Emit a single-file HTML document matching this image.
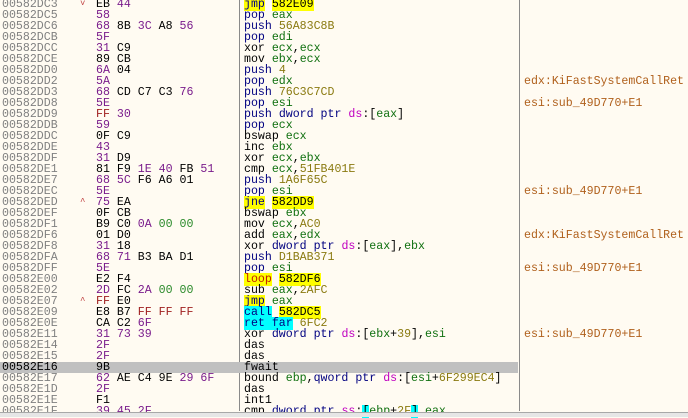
<!DOCTYPE html>
<html><head><meta charset="utf-8"><style>
html,body{margin:0;padding:0;}
body{width:688px;height:416px;overflow:hidden;background:#fffbf2;position:relative;font-family:"Liberation Mono","DejaVu Sans Mono",monospace;font-size:11.6px;}
.r{position:absolute;left:0;width:688px;height:11px;line-height:11px;white-space:pre;}
.r span{position:absolute;top:0;}
.a{left:2px;color:#808080;}
.ar{left:80px;color:#c04040;font-size:9px;}
.b{left:96px;color:#000;}
.i{left:244px;color:#000;}
.c{left:524px;color:#b0601c;}
.sel{background:#c0c0c0;width:518px;}
.sel .a{color:#000;}
i{font-style:normal;}
.p{color:#7a1c8c}.g{color:#2a8a2a}.rd{color:#a02020}
.m{color:#000080}.rg{color:#107010}.n{color:#8a7a10}.s{color:#c000c0}
.y{background:#ffff00;color:#000080}.yn{background:#ffff00;color:#000}.cy{background:#00ffff;color:#000080}.cb{background:#00ffff}
.v{position:absolute;top:0;height:411px;width:1px;background:#8a8a8a;}
</style></head><body>
<div class="v" style="left:239px"></div>
<div class="v" style="left:519px"></div>
<div class="r sel" style="top:362px;"></div>
<div class="r" style="top:-1px"><span class="a">00582DC3</span><span class="ar">˅</span><span class="b">EB <i class="p">44</i></span><span class="i"><i class="y">jmp</i> <i class="yn">582E09</i></span></div>
<div class="r" style="top:10px"><span class="a">00582DC5</span><span class="b"><i class="p">58</i></span><span class="i"><i class="m">pop</i> <i class="rg">eax</i></span></div>
<div class="r" style="top:21px"><span class="a">00582DC6</span><span class="b"><i class="p">68</i> 8B <i class="p">3C</i> A8 <i class="p">56</i></span><span class="i"><i class="m">push</i> <i class="n">56A83C8B</i></span></div>
<div class="r" style="top:32px"><span class="a">00582DCB</span><span class="b"><i class="p">5F</i></span><span class="i"><i class="m">pop</i> <i class="rg">edi</i></span></div>
<div class="r" style="top:43px"><span class="a">00582DCC</span><span class="b"><i class="p">31</i> C9</span><span class="i">xor <i class="rg">ecx</i>,<i class="rg">ecx</i></span></div>
<div class="r" style="top:54px"><span class="a">00582DCE</span><span class="b">89 CB</span><span class="i">mov <i class="rg">ebx</i>,<i class="rg">ecx</i></span></div>
<div class="r" style="top:65px"><span class="a">00582DD0</span><span class="b"><i class="p">6A</i> 04</span><span class="i"><i class="m">push</i> <i class="n">4</i></span></div>
<div class="r" style="top:76px"><span class="a">00582DD2</span><span class="b"><i class="p">5A</i></span><span class="i"><i class="m">pop</i> <i class="rg">edx</i></span><span class="c">edx:KiFastSystemCallRet</span></div>
<div class="r" style="top:87px"><span class="a">00582DD3</span><span class="b"><i class="p">68</i> CD C7 C3 <i class="p">76</i></span><span class="i"><i class="m">push</i> <i class="n">76C3C7CD</i></span></div>
<div class="r" style="top:98px"><span class="a">00582DD8</span><span class="b"><i class="p">5E</i></span><span class="i"><i class="m">pop</i> <i class="rg">esi</i></span><span class="c">esi:sub_49D770+E1</span></div>
<div class="r" style="top:109px"><span class="a">00582DD9</span><span class="b"><i class="rd">FF</i> <i class="p">30</i></span><span class="i"><i class="m">push</i> <i class="m">dword ptr</i> <i class="s">ds</i>:[<i class="rg">eax</i>]</span></div>
<div class="r" style="top:120px"><span class="a">00582DDB</span><span class="b"><i class="p">59</i></span><span class="i"><i class="m">pop</i> <i class="rg">ecx</i></span></div>
<div class="r" style="top:131px"><span class="a">00582DDC</span><span class="b">0F C9</span><span class="i">bswap <i class="rg">ecx</i></span></div>
<div class="r" style="top:142px"><span class="a">00582DDE</span><span class="b"><i class="p">43</i></span><span class="i">inc <i class="rg">ebx</i></span></div>
<div class="r" style="top:153px"><span class="a">00582DDF</span><span class="b"><i class="p">31</i> D9</span><span class="i">xor <i class="rg">ecx</i>,<i class="rg">ebx</i></span></div>
<div class="r" style="top:164px"><span class="a">00582DE1</span><span class="b">81 F9 <i class="p">1E</i> <i class="p">40</i> FB <i class="p">51</i></span><span class="i">cmp <i class="rg">ecx</i>,<i class="n">51FB401E</i></span></div>
<div class="r" style="top:175px"><span class="a">00582DE7</span><span class="b"><i class="p">68</i> <i class="p">5C</i> F6 A6 01</span><span class="i"><i class="m">push</i> <i class="n">1A6F65C</i></span></div>
<div class="r" style="top:186px"><span class="a">00582DEC</span><span class="b"><i class="p">5E</i></span><span class="i"><i class="m">pop</i> <i class="rg">esi</i></span><span class="c">esi:sub_49D770+E1</span></div>
<div class="r" style="top:197px"><span class="a">00582DED</span><span class="ar">^</span><span class="b"><i class="p">75</i> EA</span><span class="i"><i class="y">jne</i> <i class="yn">582DD9</i></span></div>
<div class="r" style="top:208px"><span class="a">00582DEF</span><span class="b">0F CB</span><span class="i">bswap <i class="rg">ebx</i></span></div>
<div class="r" style="top:219px"><span class="a">00582DF1</span><span class="b">B9 C0 <i class="p">0A</i> <i class="g">00</i> <i class="g">00</i></span><span class="i">mov <i class="rg">ecx</i>,<i class="n">AC0</i></span></div>
<div class="r" style="top:230px"><span class="a">00582DF6</span><span class="b">01 D0</span><span class="i">add <i class="rg">eax</i>,<i class="rg">edx</i></span><span class="c">edx:KiFastSystemCallRet</span></div>
<div class="r" style="top:241px"><span class="a">00582DF8</span><span class="b"><i class="p">31</i> 18</span><span class="i">xor <i class="m">dword ptr</i> <i class="s">ds</i>:[<i class="rg">eax</i>],<i class="rg">ebx</i></span></div>
<div class="r" style="top:252px"><span class="a">00582DFA</span><span class="b"><i class="p">68</i> <i class="p">71</i> B3 BA D1</span><span class="i"><i class="m">push</i> <i class="n">D1BAB371</i></span></div>
<div class="r" style="top:263px"><span class="a">00582DFF</span><span class="b"><i class="p">5E</i></span><span class="i"><i class="m">pop</i> <i class="rg">esi</i></span><span class="c">esi:sub_49D770+E1</span></div>
<div class="r" style="top:274px"><span class="a">00582E00</span><span class="b">E2 F4</span><span class="i"><i class="y" style="color:#c02000">loop</i> <i class="yn">582DF6</i></span></div>
<div class="r" style="top:285px"><span class="a">00582E02</span><span class="b"><i class="p">2D</i> FC <i class="p">2A</i> <i class="g">00</i> <i class="g">00</i></span><span class="i">sub <i class="rg">eax</i>,<i class="n">2AFC</i></span></div>
<div class="r" style="top:296px"><span class="a">00582E07</span><span class="ar">^</span><span class="b"><i class="rd">FF</i> E0</span><span class="i"><i class="y">jmp</i> <i class="rg">eax</i></span></div>
<div class="r" style="top:307px"><span class="a">00582E09</span><span class="b">E8 B7 <i class="rd">FF</i> <i class="rd">FF</i> <i class="rd">FF</i></span><span class="i"><i class="cy">call</i> <i class="yn">582DC5</i></span></div>
<div class="r" style="top:318px"><span class="a">00582E0E</span><span class="b">CA C2 <i class="p">6F</i></span><span class="i"><i class="cy">ret far</i> <i class="n">6FC2</i></span></div>
<div class="r" style="top:329px"><span class="a">00582E11</span><span class="b"><i class="p">31</i> <i class="p">73</i> <i class="p">39</i></span><span class="i">xor <i class="m">dword ptr</i> <i class="s">ds</i>:[<i class="rg">ebx</i>+<i class="n">39</i>],<i class="rg">esi</i></span><span class="c">esi:sub_49D770+E1</span></div>
<div class="r" style="top:340px"><span class="a">00582E14</span><span class="b"><i class="p">2F</i></span><span class="i">das</span></div>
<div class="r" style="top:351px"><span class="a">00582E15</span><span class="b"><i class="p">2F</i></span><span class="i">das</span></div>
<div class="r" style="top:362px"><span class="a" style="color:#000">00582E16</span><span class="b">9B</span><span class="i">fwait</span></div>
<div class="r" style="top:373px"><span class="a">00582E17</span><span class="b"><i class="p">62</i> AE C4 9E <i class="p">29</i> <i class="p">6F</i></span><span class="i">bound <i class="rg">ebp</i>,<i class="m">qword ptr</i> <i class="s">ds</i>:[<i class="rg">esi</i>+<i class="n">6F299EC4</i>]</span></div>
<div class="r" style="top:384px"><span class="a">00582E1D</span><span class="b"><i class="p">2F</i></span><span class="i">das</span></div>
<div class="r" style="top:395px"><span class="a">00582E1E</span><span class="b">F1</span><span class="i">int1</span></div>
<div class="r" style="top:406px"><span class="a">00582E1F</span><span class="b"><i class="p">39</i> <i class="p">45</i> <i class="p">2F</i></span><span class="i">cmp <i class="m">dword ptr</i> <i class="s">ss</i>:<i class="cb">[</i><i class="rg">ebp</i>+<i class="n">2F</i><i class="cb">]</i>,<i class="rg">eax</i></span></div>
<div style="position:absolute;left:0;top:412px;width:688px;height:4px;background:#e6e6e6;border-top:1px solid #a8a8a8;"></div>
</body></html>
